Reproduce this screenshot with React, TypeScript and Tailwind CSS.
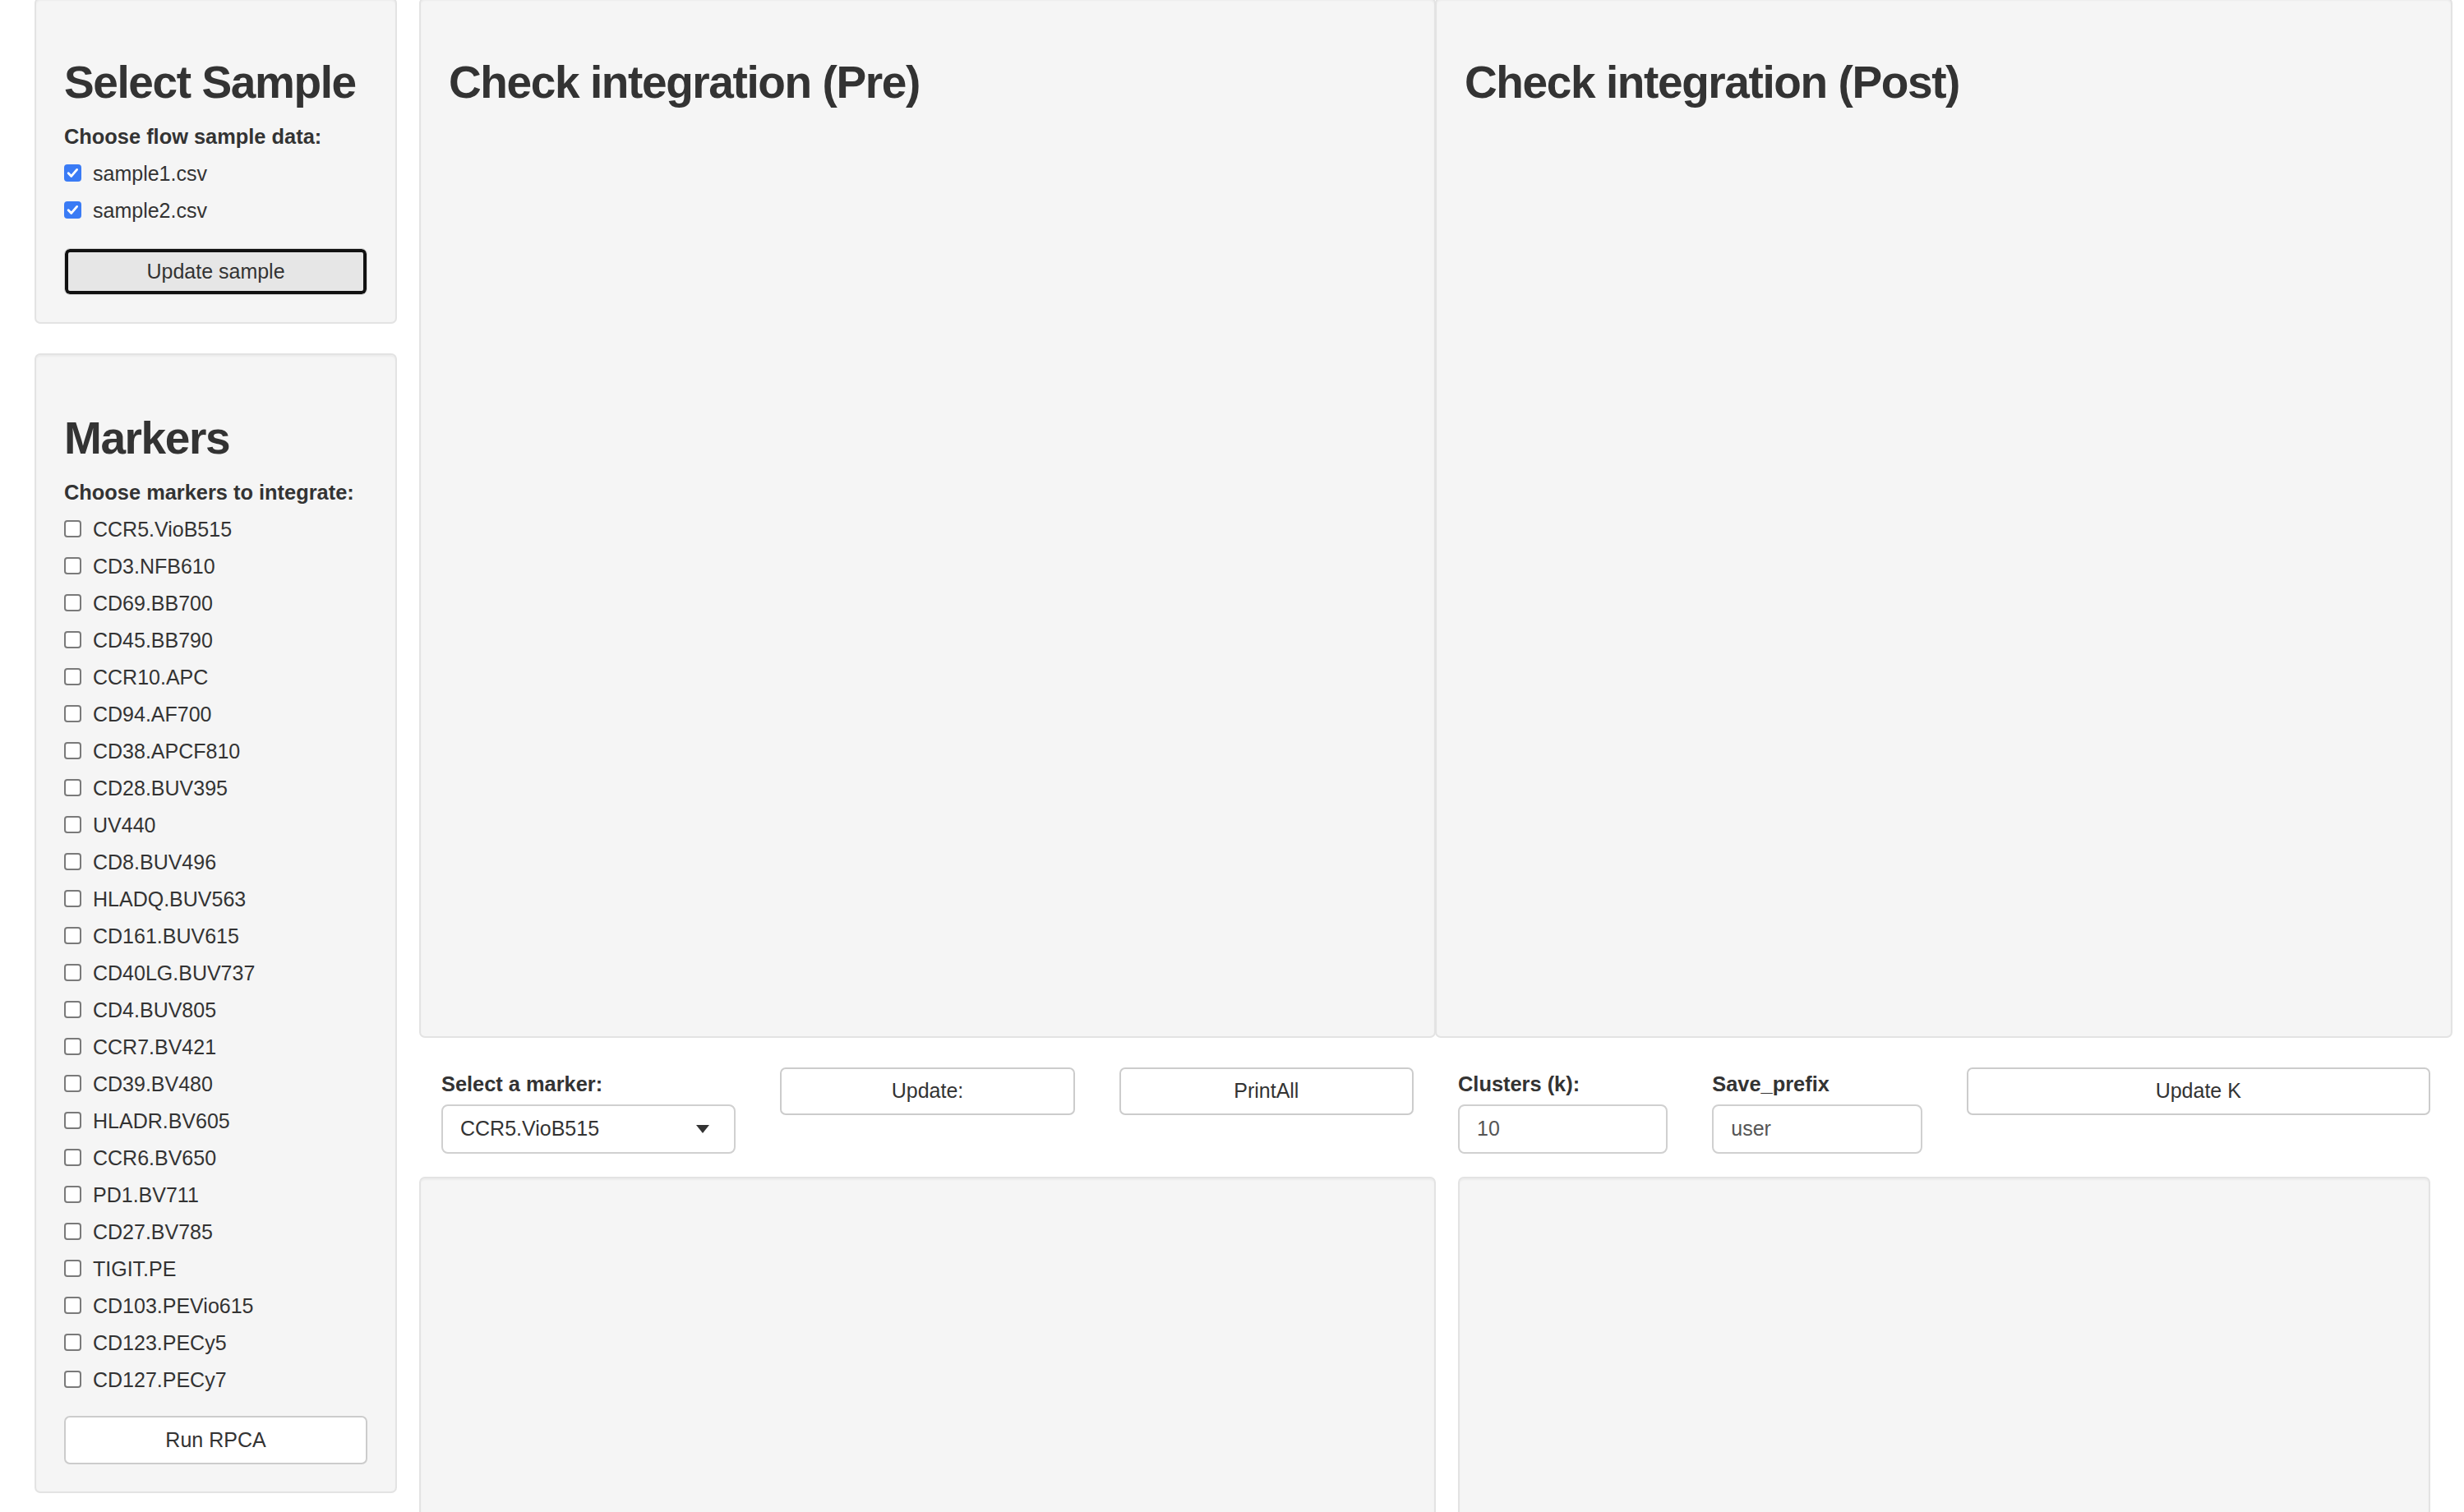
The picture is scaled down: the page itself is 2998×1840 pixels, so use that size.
import React from "react";

const markers = [
  "CCR5.VioB515",
  "CD3.NFB610",
  "CD69.BB700",
  "CD45.BB790",
  "CCR10.APC",
  "CD94.AF700",
  "CD38.APCF810",
  "CD28.BUV395",
  "UV440",
  "CD8.BUV496",
  "HLADQ.BUV563",
  "CD161.BUV615",
  "CD40LG.BUV737",
  "CD4.BUV805",
  "CCR7.BV421",
  "CD39.BV480",
  "HLADR.BV605",
  "CCR6.BV650",
  "PD1.BV711",
  "CD27.BV785",
  "TIGIT.PE",
  "CD103.PEVio615",
  "CD123.PECy5",
  "CD127.PECy7",
];

function Box({ checked }: { checked: boolean }) {
  if (checked) {
    return (
      <span className="flex h-[21px] w-[21px] items-center justify-center rounded-[4px] bg-[#3a7bf5]">
        <svg width="21" height="21" viewBox="0 0 21 21">
          <path
            d="M5.2 10.8 L8.8 14.4 L15.6 6.4"
            fill="none"
            stroke="#ffffff"
            strokeWidth="2.8"
            strokeLinecap="round"
            strokeLinejoin="round"
          />
        </svg>
      </span>
    );
  }
  return <span className="block h-[21px] w-[21px] rounded-[4px] border-2 border-[#7a7a7a] bg-white" />;
}

function CheckRow({ label, checked }: { label: string; checked: boolean }) {
  return (
    <div className="flex h-[36px] items-start">
      <span className="mt-[7px]">
        <Box checked={checked} />
      </span>
      <span className="ml-[14px] text-[25px] leading-[36px] text-[#333]">{label}</span>
    </div>
  );
}

const well = "bg-[#f5f5f5] border-2 border-[#e3e3e3] rounded-[7px] shadow-[inset_0_2px_2px_rgba(0,0,0,0.04)]";
const heading = "text-[55px] font-bold leading-[60px] tracking-[-1.4px] text-[#333]";
const label = "text-[25.4px] font-bold leading-[36px] text-[#333]";

export default function App() {
  return (
    <div className="h-[1840px] w-[2998px] overflow-hidden bg-white font-['Liberation_Sans',Arial,sans-serif] text-[#333]">
      <div className="flex pl-[42px]">
        {/* Sidebar */}
        <div className="w-[441px] shrink-0">
          <div className={`${well} -mt-[3px] px-[34px] pb-[33px] pt-[71px]`}>
            <h2 className={heading}>Select Sample</h2>
            <div className={`${label} mt-[18px]`}>Choose flow sample data:</div>
            <div className="mt-[9px] flex flex-col gap-[9px]">
              <CheckRow label="sample1.csv" checked />
              <CheckRow label="sample2.csv" checked />
            </div>
            <button className="mt-[28px] flex h-[57px] w-full items-center justify-center rounded-[7px] border border-[#d4d4d4] bg-[#e6e6e6] text-[25px] text-[#333] shadow-[inset_0_0_0_4px_#111]">
              Update sample
            </button>
          </div>

          <div className={`${well} mt-[36px] px-[34px] pb-[33px] pt-[71px]`}>
            <h2 className={heading}>Markers</h2>
            <div className={`${label} mt-[18px]`}>Choose markers to integrate:</div>
            <div className="mt-[9px] flex flex-col gap-[9px]">
              {markers.map((m) => (
                <CheckRow key={m} label={m} checked={false} />
              ))}
            </div>
            <button className="mt-[26px] flex h-[59px] w-full items-center justify-center rounded-[7px] border-2 border-[#cccccc] bg-white text-[25px] text-[#333]">
              Run RPCA
            </button>
          </div>
        </div>

        {/* Main */}
        <div className="ml-[27px] w-[2474px] shrink-0">
          <div className="-mt-[3px] grid h-[1266px] grid-cols-2">
            <div className={`${well} px-[34px] pt-[71px]`}>
              <h2 className={heading}>Check integration (Pre)</h2>
            </div>
            <div className={`${well} -ml-[1px] px-[34px] pt-[71px]`}>
              <h2 className={heading}>Check integration (Post)</h2>
            </div>
          </div>

          <div className="grid h-[169px] grid-cols-2">
            <div className="grid grid-cols-3">
              <div className="px-[27px] pt-[38px]">
                <div className={label}>Select a marker:</div>
                <div className="mt-[7px] flex h-[60px] items-center justify-between rounded-[8px] border-2 border-[#d0d0d0] bg-white pl-[21px] pr-[30px]">
                  <span className="text-[25px] text-[#333]">CCR5.VioB515</span>
                  <svg width="16" height="10" viewBox="0 0 16 10">
                    <path d="M0 0 L16 0 L8 10 Z" fill="#333" />
                  </svg>
                </div>
              </div>
              <div className="px-[27px] pt-[36px]">
                <button className="flex h-[58px] w-full items-center justify-center rounded-[7px] border-2 border-[#cccccc] bg-white text-[25px] text-[#333]">
                  Update:
                </button>
              </div>
              <div className="px-[27px] pt-[36px]">
                <button className="flex h-[58px] w-full items-center justify-center rounded-[7px] border-2 border-[#cccccc] bg-white text-[25px] text-[#333]">
                  PrintAll
                </button>
              </div>
            </div>
            <div className="grid grid-cols-4">
              <div className="px-[27px] pt-[38px]">
                <div className={label}>Clusters (k):</div>
                <div className="mt-[7px] flex h-[60px] items-center rounded-[8px] border-2 border-[#d0d0d0] bg-white pl-[21px]">
                  <span className="text-[25px] text-[#555]">10</span>
                </div>
              </div>
              <div className="px-[27px] pt-[38px]">
                <div className={label}>Save_prefix</div>
                <div className="mt-[7px] flex h-[60px] items-center rounded-[8px] border-2 border-[#d0d0d0] bg-white pl-[21px]">
                  <span className="text-[25px] text-[#555]">user</span>
                </div>
              </div>
              <div className="col-span-2 px-[27px] pt-[36px]">
                <button className="flex h-[58px] w-full items-center justify-center rounded-[7px] border-2 border-[#cccccc] bg-white text-[25px] text-[#333]">
                  Update K
                </button>
              </div>
            </div>
          </div>

          <div className="grid grid-cols-2">
            <div className={`${well} h-[700px]`} />
            <div className="px-[27px]">
              <div className={`${well} h-[700px]`} />
            </div>
          </div>
        </div>
      </div>
    </div>
  );
}
